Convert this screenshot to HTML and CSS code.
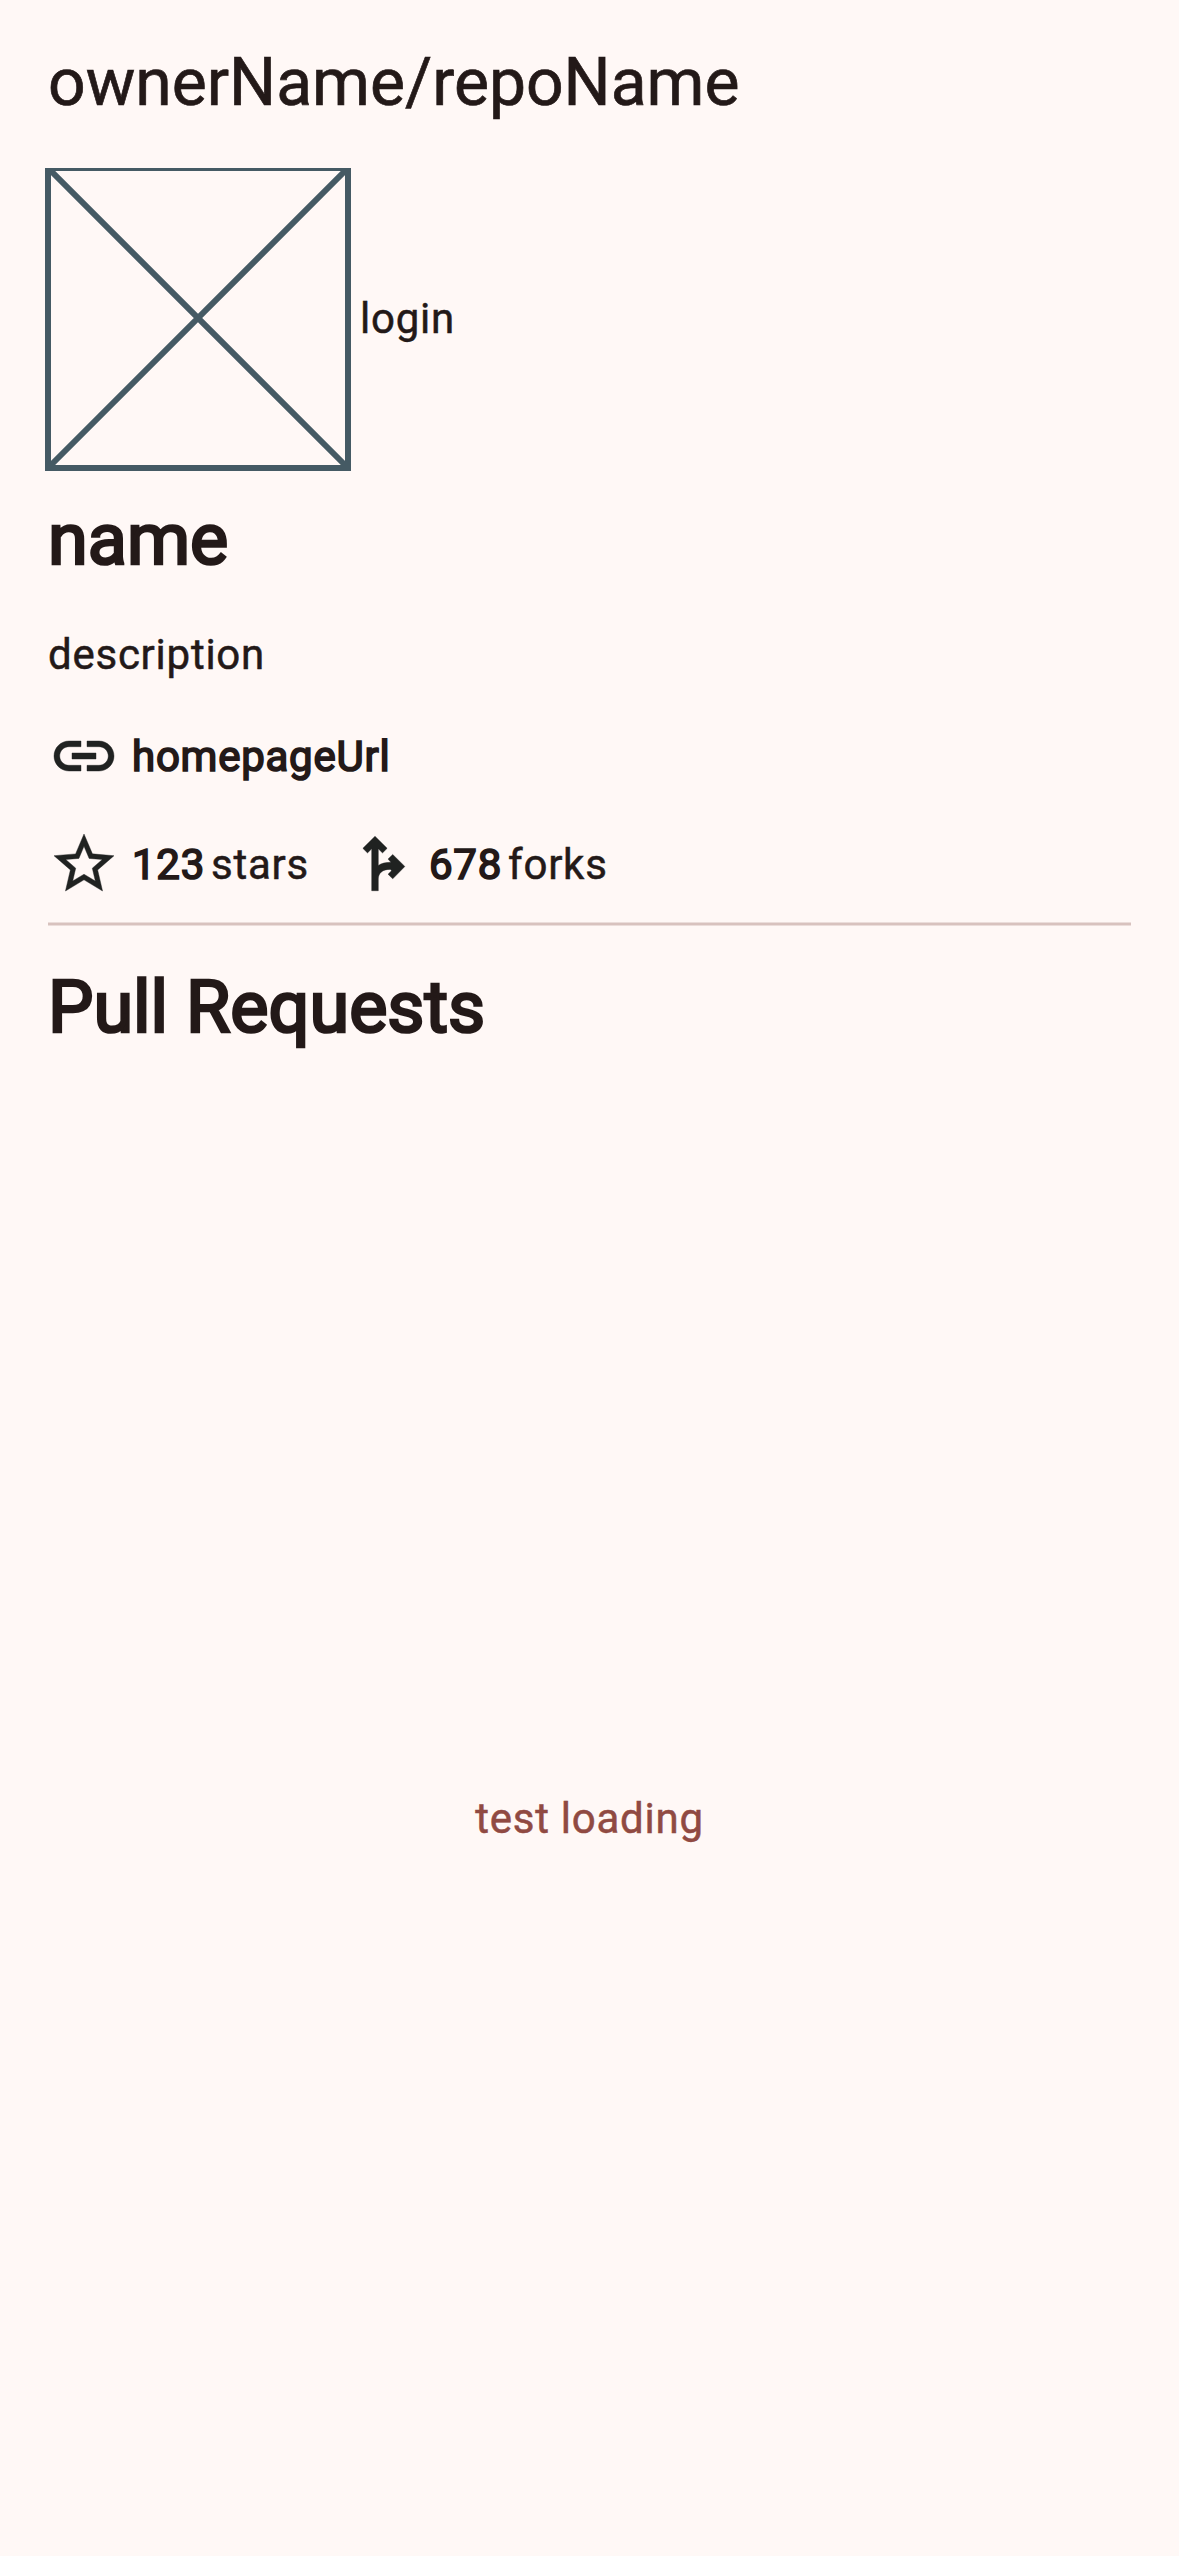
FILE: index.html
```html
<!DOCTYPE html>
<html lang="en">
<head>
<meta charset="utf-8">
<title>ownerName/repoName</title>
<link rel="stylesheet" href="styles.css">
</head>
<body>
<header class="bar"><h1 class="title">ownerName/repoName</h1></header>
<main class="content">
  <div class="owner">
    <svg class="avatar" viewBox="0 0 300 300"><path d="M0 0L300 300M300 0L0 300M0 0H300V300H0Z"/></svg>
    <span class="text">login</span>
  </div>
  <h2 class="heading">name</h2>
  <p class="text description">description</p>
  <div class="row link">
    <svg class="icon" viewBox="0 0 24 24"><path d="M3.9 12c0-1.71 1.39-3.1 3.1-3.1h4V7H7c-2.76 0-5 2.24-5 5s2.24 5 5 5h4v-1.9H7c-1.71 0-3.1-1.39-3.1-3.1zM8 13h8v-2H8v2zm9-6h-4v1.9h4c1.71 0 3.1 1.39 3.1 3.1s-1.39 3.1-3.1 3.1h-4V17h4c2.76 0 5-2.24 5-5s-2.24-5-5-5z"/></svg>
    <span class="text bold">homepageUrl</span>
  </div>
  <div class="row stats">
    <svg class="icon" viewBox="0 0 24 24"><path d="M22 9.24l-7.19-.62L12 2 9.19 8.63 2 9.24l5.46 4.73L5.82 21 12 17.27 18.18 21l-1.63-7.03L22 9.24zM12 15.4l-3.76 2.27 1-4.28-3.32-2.88 4.38-.38L12 6.1l1.71 4.04 4.38.38-3.32 2.88 1 4.28L12 15.4z"/></svg>
    <span class="text bold">123</span><span class="text unit">stars</span>
    <svg class="icon fork" viewBox="0 0 24 24"><path d="M8.900 20.900V6.950L7.500 8.300 5.950 6.790 10 2.750l4.050 4.040L12.500 8.300 11.100 6.950V12.500c1.100-.75 2.300-1.050 4.200-1.050L14.350 10.350 15.910 8.820 19.950 12.820 15.910 16.950 14.350 15.400 15.500 14.250 15.200 13.800c-2.700-.1-4.050 1.200-4.100 3.200V20.900z"/></svg>
    <span class="text bold">678</span><span class="text unit">forks</span>
  </div>
  <hr class="divider">
  <h2 class="heading pulls">Pull Requests</h2>
  <div class="loading"><span class="text">test loading</span></div>
</main>
</body>
</html>
```
FILE: styles.css
```css
* { box-sizing: border-box; }
body { margin: 0; height: 2556px; display: flex; flex-direction: column; background: #fff8f6; color: #231918; font-family: Roboto, sans-serif; }
h1, h2, p { margin: 0; font-weight: 400; white-space: nowrap; }
.bar { height: 168px; padding: 41px 48px 0; }
.title { font-size: 66px; line-height: 84px; -webkit-text-stroke: .7px; }
.content { flex: 1; display: flex; flex-direction: column; padding: 0 48px; }
.owner { display: flex; align-items: center; gap: 12px; height: 300px; }
.avatar { width: 300px; height: 300px; overflow: visible; clip-path: inset(0 -6px -6px -6px); fill: none; stroke: #455a64; stroke-width: 6; }
.text { padding-top: 2px; font-size: 42px; line-height: 60px; letter-spacing: .75px; -webkit-text-stroke: .5px; }
.bold { -webkit-text-stroke: 1.7px; }
.heading { margin-top: 24px; font-size: 72px; line-height: 96px; -webkit-text-stroke: 2.7px; }
.description { margin-top: 35px; }
.row { display: flex; align-items: center; height: 72px; }
.link { margin-top: 35px; }
.stats { margin-top: 36px; }
.icon { width: 72px; height: 72px; margin-right: 12px; fill: #202221; stroke: #202221; stroke-width: .14; }
.fork { margin-left: 36px; }
.unit { margin-left: 6px; }
.divider { width: 100%; height: 4px; margin: 22px 0 0; border: solid #ebddda; border-width: 1px 0; background: #d8c2be; }
.pulls { margin-top: 34px; }
.loading { flex: 1; display: flex; align-items: center; justify-content: center; padding-top: 24px; color: #904a42; }
```
